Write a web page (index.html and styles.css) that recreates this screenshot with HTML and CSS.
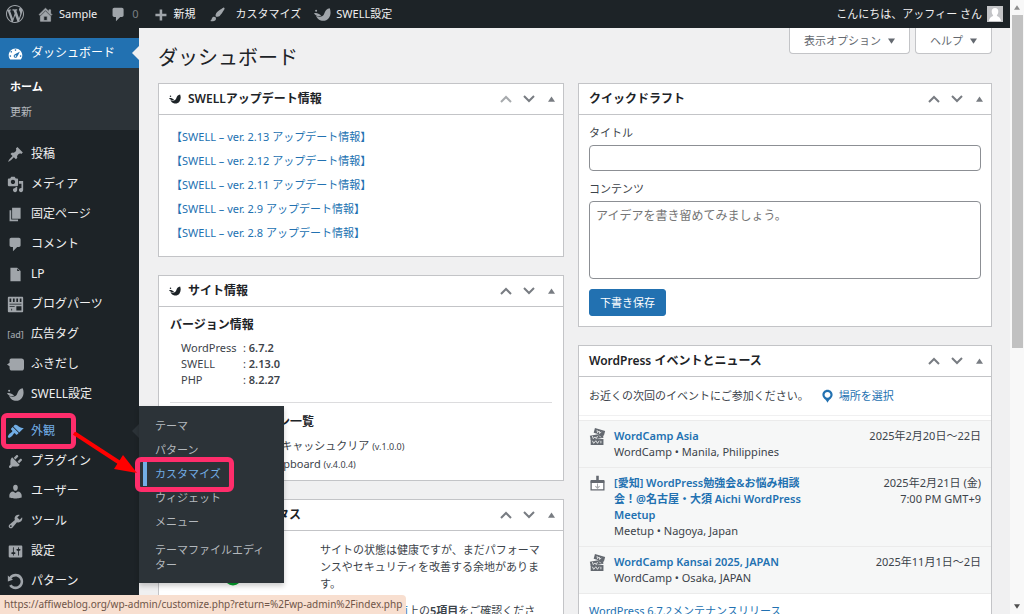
FILE: index.html
```html
<!DOCTYPE html>
<html lang="ja">
<head>
<meta charset="utf-8">
<meta name="viewport" content="width=device-width, initial-scale=1">
<title>ダッシュボード ‹ Sample — WordPress</title>
<link rel="stylesheet" href="styles.css">
</head>
<body>
<svg class="sprite" aria-hidden="true">
  <symbol id="i-wp" viewBox="0 0 20 20"><path d="M20 10c0-5.51-4.49-10-10-10C4.48 0 0 4.49 0 10c0 5.52 4.48 10 10 10 5.51 0 10-4.48 10-10zM7.78 15.37L4.37 6.22c.55-.02 1.17-.08 1.17-.08.5-.06.44-1.13-.06-1.11 0 0-1.45.11-2.37.11-.18 0-.37 0-.58-.01C4.12 2.69 6.87 1.11 10 1.11c2.33 0 4.45.87 6.05 2.34-.68-.11-1.65.39-1.65 1.58 0 .74.45 1.36.9 2.1.35.61.55 1.36.55 2.46 0 1.49-1.4 5-1.4 5l-3.03-8.37c.54-.02.82-.17.82-.17.5-.05.44-1.25-.06-1.22 0 0-1.44.12-2.38.12-.87 0-2.33-.12-2.33-.12-.5-.03-.56 1.2-.06 1.22l.92.08 1.26 3.41zM17.41 10c.24-.64.74-1.87.43-4.25.7 1.29 1.05 2.71 1.05 4.25 0 3.29-1.73 6.24-4.4 7.78.97-2.59 1.94-5.2 2.92-7.78zM6.1 18.09C3.12 16.65 1.11 13.53 1.11 10c0-1.3.23-2.48.72-3.59C3.25 10.3 4.67 14.2 6.1 18.09zm4.03-6.63l2.58 6.98c-.86.29-1.76.45-2.71.45-.79 0-1.57-.11-2.29-.33.81-2.38 1.62-4.74 2.42-7.1z"/></symbol>
  <symbol id="i-home" viewBox="0 0 20 20"><path stroke="currentColor" stroke-width=".8" d="M16 8.5l1.53 1.53-1.06 1.06L10 4.6l-6.47 6.49-1.06-1.06L10 2.5l4 4v-2h2v4zm-6-2.46l6 5.99V18H4v-5.97zM12 17v-5H8v5h4z"/></symbol>
  <symbol id="i-comment" viewBox="0 0 20 20"><path d="M5 2h9c1.1 0 2 .9 2 2v7c0 1.1-.9 2-2 2h-2l-5 5v-5H5c-1.1 0-2-.9-2-2V4c0-1.1.9-2 2-2z"/></symbol>
  <symbol id="i-plus" viewBox="0 0 20 20"><path d="M17 9v3h-5v5H9v-5H4V9h5V4h3v5z"/></symbol>
  <symbol id="i-brush" viewBox="0 0 20 20"><path d="M18.33 3.57s.27-.8-.31-1.36c-.53-.52-1.22-.24-1.22-.24-.61.3-5.76 3.47-7.67 5.57-.86.96-2.06 3.79-1.09 4.82.92.98 3.96-.17 4.79-1 2.06-2.06 5.21-7.17 5.5-7.79zM1.4 17.65c2.37-1.56 1.46-3.41 3.23-4.64.93-.65 2.22-.62 3.08.29.63.67.8 2.57-.16 3.46-1.57 1.45-4 1.55-6.15.89z"/></symbol>
  <symbol id="i-swell" viewBox="0 0 20 20"><path d="M18.500 2.500c1.600 4 1.200 8.500-1 11.500-2.300 3-6 4.200-9.500 3-3-1-4.800-3-5.500-5.500 2.500 1.600 5.300 1.700 7.500.3C13.500 9.500 11.500 3.800 18.500 2.500z"/><path d="M0 8.500c2.500-.8 5.500-.3 8.500 3-3.500 1-6.500.5-8.500-3z"/><circle cx="2.500" cy="5.500" r="1.200"/></symbol>
  <symbol id="i-dash" viewBox="0 0 20 20"><path d="M3.76 17h12.48c1.1-1.37 1.76-3.11 1.76-5 0-4.42-3.58-8-8-8s-8 3.58-8 8c0 1.89.66 3.63 1.76 5zM9 6c0-.55.45-1 1-1s1 .45 1 1c0 .56-.45 1-1 1s-1-.44-1-1zM4 8c0-.55.45-1 1-1s1 .45 1 1c0 .56-.45 1-1 1s-1-.44-1-1zm4.52 3.400c.84-.83 6.510-3.500 6.510-3.500s-2.660 5.680-3.490 6.510c-.84.84-2.180.84-3.020 0-.83-.83-.83-2.180 0-3.010zM3 13c0-.55.45-1 1-1s1 .45 1 1c0 .56-.45 1-1 1s-1-.44-1-1zm6 0c0 .56.45 1 1 1s1-.44 1-1c0-.55-.45-1-1-1s-1 .45-1 1zm6 0c0-.55.45-1 1-1s1 .45 1 1c0 .56-.45 1-1 1s-1-.44-1-1z"/></symbol>
  <symbol id="i-pin" viewBox="0 0 20 20"><path d="M10.440 3.020l1.820-1.820 6.360 6.350-1.830 1.820c-1.050-.68-2.480-.57-3.410.36l-.75.75c-.92.93-1.040 2.350-.35 3.410l-1.830 1.820-2.410-2.410-2.800 2.790c-.42.42-3.380 2.710-3.800 2.290s1.860-3.390 2.280-3.810l2.790-2.790L4.100 9.360l1.830-1.820c1.050.69 2.480.57 3.400-.36l.75-.75c.93-.92 1.050-2.350.36-3.410z"/></symbol>
  <symbol id="i-media" viewBox="0 0 20 20"><path d="M13 11V4c0-.55-.45-1-1-1h-1.670L9 1H5L3.670 3H2c-.55 0-1 .45-1 1v7c0 .55.45 1 1 1h10c.55 0 1-.45 1-1zM7 4.500c1.380 0 2.500 1.120 2.500 2.500S8.380 9.500 7 9.500 4.500 8.380 4.500 7 5.620 4.500 7 4.500zM14 6h5v10.500c0 1.380-1.120 2.500-2.500 2.500S14 17.880 14 16.500s1.120-2.500 2.500-2.500c.17 0 .34.02.5.05V9h-3V6zm-4 8.050V13h2v3.500c0 1.380-1.120 2.500-2.500 2.500S7 17.880 7 16.500 8.120 14 9.500 14c.17 0 .34.02.5.05z"/></symbol>
  <symbol id="i-page" viewBox="0 0 20 20"><path d="M6 15V2h10v13H6zm-1 1h8v2H3V5h2v11z"/></symbol>
  <symbol id="i-doc" viewBox="0 0 20 20"><path d="M12 2l4 4v12H4V2h8zm0 4h3l-3-3v3z"/></symbol>
  <symbol id="i-parts" viewBox="0 0 20 20"><path fill-rule="evenodd" d="M2 1h16q1 0 1 1v16q0 1-1 1H2q-1 0-1-1V2q0-1 1-1zm1 2v4h2V3zm4 0v4h2V3zm4 0v4h2V3zm4 0v4h2V3zM3 9v1h14V9zm0 3v1h6v-1zm2 3v2h1v-2zm6-3v5h6v-5z"/></symbol>
  <symbol id="i-balloon" viewBox="0 0 20 20"><path d="M5 3h12q3 0 3 3v8q0 3-3 3H6q-3 0-3-3v-2L0 10l3-2V5q0-2 2-2z"/></symbol>
  <symbol id="i-theme" viewBox="0 0 20 20"><path d="M14.480 11.060L7.410 3.990l1.500-1.500c.5-.56 2.300-.47 3.510.32 1.210.8 1.430 1.280 2.910 2.100 1.180.64 2.450 1.260 4.450.85zm-.71.71L6.700 4.700 4.930 6.470c-.39.39-.39 1.020 0 1.410l1.060 1.060c.39.39.39 1.030 0 1.420-.6.6-1.430 1.110-2.210 1.690-.35.26-.7.53-1.010.84C1.430 14.230.4 16.080 1.400 17.070c.99 1 2.840-.03 4.180-1.360.31-.31.58-.66.85-1.020.57-.78 1.080-1.610 1.690-2.210.39-.39 1.020-.39 1.410 0l1.060 1.060c.39.39 1.020.39 1.410 0z"/></symbol>
  <symbol id="i-plugin" viewBox="0 0 20 20"><path d="M13.110 4.360L9.870 7.600 8 5.730l3.240-3.240c.35-.34 1.050-.2 1.560.32.52.51.66 1.210.31 1.550zm-8 1.770l.91-1.120 9.010 9.010-1.190.84c-.71.71-2.630 1.160-3.820 1.160H6.140L4.900 17.260c-.59.59-1.540.59-2.120 0-.59-.58-.59-1.530 0-2.120l1.240-1.240v-3.880c0-1.130.4-3.190 1.090-3.890zm7.260 3.970l3.240-3.240c.34-.35 1.040-.21 1.550.31.52.51.66 1.210.31 1.550l-3.240 3.250z"/></symbol>
  <symbol id="i-user" viewBox="0 0 20 20"><path d="M10 9.250c-2.270 0-2.730-3.440-2.730-3.440C7 4.020 7.820 2 9.970 2c2.160 0 2.980 2.020 2.710 3.810 0 0-.41 3.440-2.680 3.440zm0 2.570L12.720 10c2.390 0 4.520 2.330 4.520 4.530v2.490s-3.650 1.130-7.240 1.130c-3.650 0-7.240-1.130-7.240-1.130v-2.490c0-2.250 1.940-4.480 4.470-4.480z"/></symbol>
  <symbol id="i-tool" viewBox="0 0 20 20"><path d="M16.680 9.770c-1.340 1.340-3.300 1.670-4.950.99l-5.410 6.520c-.99.99-2.590.99-3.580 0s-.99-2.590 0-3.570l6.520-5.420c-.68-1.650-.35-3.610.99-4.950 1.280-1.280 3.120-1.620 4.720-1.060l-2.890 2.890 2.820 2.820 2.860-2.870c.53 1.580.18 3.390-1.080 4.650zM3.810 16.210c.4.39 1.040.39 1.430 0 .4-.4.4-1.040 0-1.430-.39-.4-1.030-.4-1.430 0-.39.39-.39 1.030 0 1.430z"/></symbol>
  <symbol id="i-set" viewBox="0 0 20 20"><path d="M18 16V4c0-.55-.45-1-1-1H3c-.55 0-1 .45-1 1v12c0 .55.45 1 1 1h14c.55 0 1-.45 1-1zM8 11h1c.55 0 1 .45 1 1s-.45 1-1 1H8v1.500c0 .28-.22.5-.5.5s-.5-.22-.5-.5V13H6c-.55 0-1-.45-1-1s.45-1 1-1h1V5.500c0-.28.22-.5.5-.5s.5.22.5.5V11zm5-2h-1c-.55 0-1-.45-1-1s.45-1 1-1h1V5.500c0-.28.22-.5.5-.5s.5.22.5.5V7h1c.55 0 1 .45 1 1s-.45 1-1 1h-1v5.500c0 .28-.22.5-.5.5s-.5-.22-.5-.5V9z"/></symbol>
  <symbol id="i-rotate" viewBox="0 0 20 20"><path d="M10.250 1.020c5.100 0 8.750 4.040 8.750 9s-3.650 9-8.750 9c-3.200 0-6.020-1.590-7.680-3.990l2.590-1.520c1.100 1.500 2.860 2.510 4.840 2.510 3.300 0 6-2.790 6-6s-2.700-6-6-6c-1.970 0-3.720 1-4.820 2.490L7 8.020l-6 2v-7L2.890 4.600c1.690-2.170 4.360-3.580 7.360-3.580z"/></symbol>
  <symbol id="i-location" viewBox="0 0 20 20"><path d="M10 2C6.690 2 4 4.690 4 8c0 2.020 1.170 3.710 2.530 4.890.43.37 1.180.96 1.850 1.830.74.97 1.410 2.010 1.620 2.710.21-.7.88-1.740 1.620-2.710.67-.87 1.420-1.460 1.850-1.830C14.830 11.710 16 10.020 16 8c0-3.310-2.690-6-6-6zm0 2.560c1.900 0 3.440 1.540 3.440 3.440S11.900 11.440 10 11.440 6.560 9.900 6.560 8 8.100 4.560 10 4.560z"/></symbol>
  <symbol id="i-camp" viewBox="0 0 20 20"><path d="M7 0l12 3.500-1.500 5.500L5.500 5.500z"/><path d="M1 9l15-2.500 1 5L2 14z"/><path d="M2 13h15v7H2z"/><path d="M9.500 2.500l.5 3 2-2 .5 3 2-2M4 9.500l1 3 2-2 1.500 2 1.500-3M12 9l2 2M4 15l1.500 3L8 15l2 3 2-3M14 15v3" fill="none" stroke="#f6f7f7" stroke-width="1"/></symbol>
  <symbol id="i-meetup" viewBox="0 0 20 20"><path d="M2.500 7.500h15v10h-15z" fill="#fff" stroke="currentColor" stroke-width="1.500"/><path d="M2 6h16v3.500H2zM8.500 1h3v7h-3z"/><path d="M10 10v5M7.500 13l2.500 2.500 2.500-2.500" fill="none" stroke="#a7aaad" stroke-width="1.200"/></symbol>
  <symbol id="i-up" viewBox="0 0 14 10"><path d="M2 8l5-5 5 5" fill="none" stroke="currentColor" stroke-width="2"/></symbol>
  <symbol id="i-down" viewBox="0 0 14 10"><path d="M2 2l5 5 5-5" fill="none" stroke="currentColor" stroke-width="2"/></symbol>
  <symbol id="i-tri" viewBox="0 0 8 6"><path d="M4 0l4 6H0z"/></symbol>
</svg>

<div class="window">
  <div class="page">
    <header class="adminbar">
      <a class="bar-item bar-logo" href="#" aria-label="WordPress について"><svg class="icon-lg"><use href="#i-wp"/></svg></a>
      <a class="bar-item bar-site" href="#"><svg class="icon"><use href="#i-home"/></svg>Sample</a>
      <a class="bar-item bar-comments" href="#"><svg class="icon"><use href="#i-comment"/></svg><span class="dim">0</span></a>
      <a class="bar-item bar-new" href="#"><svg class="icon"><use href="#i-plus"/></svg>新規</a>
      <a class="bar-item bar-custom" href="#"><svg class="icon"><use href="#i-brush"/></svg>カスタマイズ</a>
      <a class="bar-item bar-swell" href="#"><svg class="icon"><use href="#i-swell"/></svg>SWELL設定</a>
      <a class="bar-item bar-user" href="#">こんにちは、アッフィー さん<svg class="avatar" viewBox="0 0 16 16"><path class="avatar-bg" d="M0 0h16v16H0z"/><path class="avatar-fg" d="M8 2c2.200 0 3.500 1.500 3.300 3.800-.1 1.700-.9 3-1.500 3.500.2 1.700 3.700 1.200 4.200 5.700H2c.5-4.500 4-4 4.200-5.700-.6-.5-1.400-1.800-1.500-3.500C4.500 3.500 5.800 2 8 2z"/></svg></a>
    </header>

    <div class="body">
      <nav class="sidebar" aria-label="メインメニュー">
        <a class="menu-item current" href="#"><svg class="icon"><use href="#i-dash"/></svg>ダッシュボード</a>
        <div class="submenu">
          <a class="here" href="#">ホーム</a>
          <a href="#">更新</a>
        </div>
        <div class="menu-group">
          <a class="menu-item" href="#"><svg class="icon"><use href="#i-pin"/></svg>投稿</a>
          <a class="menu-item" href="#"><svg class="icon"><use href="#i-media"/></svg>メディア</a>
          <a class="menu-item" href="#"><svg class="icon"><use href="#i-page"/></svg>固定ページ</a>
          <a class="menu-item" href="#"><svg class="icon"><use href="#i-comment"/></svg>コメント</a>
          <a class="menu-item" href="#"><svg class="icon"><use href="#i-doc"/></svg>LP</a>
          <a class="menu-item" href="#"><svg class="icon"><use href="#i-parts"/></svg>ブログパーツ</a>
          <a class="menu-item" href="#"><span class="icon ad">[ad]</span>広告タグ</a>
          <a class="menu-item" href="#"><svg class="icon"><use href="#i-balloon"/></svg>ふきだし</a>
          <a class="menu-item" href="#"><svg class="icon"><use href="#i-swell"/></svg>SWELL設定</a>
        </div>
        <div class="menu-group second">
          <div class="menu-parent">
            <a class="menu-item open" href="#"><svg class="icon"><use href="#i-theme"/></svg>外観</a>
            <div class="flyout">
              <a href="#">テーマ</a>
              <a href="#">パターン</a>
              <a class="hover" href="#">カスタマイズ</a>
              <a href="#">ウィジェット</a>
              <a href="#">メニュー</a>
              <a class="two-line" href="#">テーマファイルエディター</a>
            </div>
            <span class="mark mark-parent"></span>
            <span class="mark mark-child"></span>
            <svg class="mark-arrow" viewBox="0 0 66 44"><path d="M1 1l46 30" stroke="#f00" stroke-width="4" fill="none"/><path d="M50 23l14 18-23-4z" fill="#f00"/></svg>
          </div>
          <a class="menu-item" href="#"><svg class="icon"><use href="#i-plugin"/></svg>プラグイン</a>
          <a class="menu-item" href="#"><svg class="icon"><use href="#i-user"/></svg>ユーザー</a>
          <a class="menu-item" href="#"><svg class="icon"><use href="#i-tool"/></svg>ツール</a>
          <a class="menu-item" href="#"><svg class="icon"><use href="#i-set"/></svg>設定</a>
          <a class="menu-item" href="#"><svg class="icon"><use href="#i-rotate"/></svg>パターン</a>
        </div>
      </nav>

      <main class="content">
        <div class="page-head">
          <h1>ダッシュボード</h1>
          <div class="screen-tabs">
            <button type="button">表示オプション<svg class="tri"><use href="#i-tri"/></svg></button>
            <button type="button">ヘルプ<svg class="tri"><use href="#i-tri"/></svg></button>
          </div>
        </div>

        <div class="columns">
          <div class="column">
            <section class="box">
              <div class="box-head"><svg class="icon-sm"><use href="#i-swell"/></svg><h2>SWELLアップデート情報</h2>
                <button class="ctl off" type="button" aria-label="上に移動"><svg><use href="#i-up"/></svg></button><button class="ctl" type="button" aria-label="下に移動"><svg><use href="#i-down"/></svg></button><button class="ctl toggle" type="button" aria-label="開閉"><svg><use href="#i-tri"/></svg></button></div>
              <ul class="updates">
                <li><a href="#">【SWELL – ver. 2.13 アップデート情報】</a></li>
                <li><a href="#">【SWELL – ver. 2.12 アップデート情報】</a></li>
                <li><a href="#">【SWELL – ver. 2.11 アップデート情報】</a></li>
                <li><a href="#">【SWELL – ver. 2.9 アップデート情報】</a></li>
                <li><a href="#">【SWELL – ver. 2.8 アップデート情報】</a></li>
              </ul>
            </section>

            <section class="box">
              <div class="box-head"><svg class="icon-sm"><use href="#i-swell"/></svg><h2>サイト情報</h2>
                <button class="ctl" type="button" aria-label="上に移動"><svg><use href="#i-up"/></svg></button><button class="ctl" type="button" aria-label="下に移動"><svg><use href="#i-down"/></svg></button><button class="ctl toggle" type="button" aria-label="開閉"><svg><use href="#i-tri"/></svg></button></div>
              <div class="site-info">
                <h3>バージョン情報</h3>
                <dl class="versions">
                  <dt>WordPress</dt><dd>: <b>6.7.2</b></dd>
                  <dt>SWELL</dt><dd>: <b>2.13.0</b></dd>
                  <dt>PHP</dt><dd>: <b>8.2.27</b></dd>
                </dl>
                <h3 class="divided">有効化中のプラグイン一覧</h3>
                <ul class="plugins">
                  <li>ConoHa WING 自動 キャッシュクリア <small>(v.1.0.0)</small></li>
                  <li>Copy Anything to Clipboard <small>(v.4.0.4)</small></li>
                </ul>
              </div>
            </section>

            <section class="box">
              <div class="box-head"><h2>サイトヘルスステータス</h2>
                <button class="ctl" type="button" aria-label="上に移動"><svg><use href="#i-up"/></svg></button><button class="ctl" type="button" aria-label="下に移動"><svg><use href="#i-down"/></svg></button><button class="ctl toggle" type="button" aria-label="開閉"><svg><use href="#i-tri"/></svg></button></div>
              <div class="health">
                <div class="health-status"><svg class="ring" viewBox="0 0 18 18"><circle cx="9" cy="9" r="7"/></svg>良好</div>
                <div class="health-text">
                  <p>サイトの状態は健康ですが、まだパフォーマンスやセキュリティを改善する余地があります。</p>
                  <p><a href="#">サイトヘルス画面</a>上の<b>5項目</b>をご確認ください。</p>
                </div>
              </div>
            </section>
          </div>

          <div class="column">
            <section class="box">
              <div class="box-head"><h2>クイックドラフト</h2>
                <button class="ctl" type="button" aria-label="上に移動"><svg><use href="#i-up"/></svg></button><button class="ctl" type="button" aria-label="下に移動"><svg><use href="#i-down"/></svg></button><button class="ctl toggle" type="button" aria-label="開閉"><svg><use href="#i-tri"/></svg></button></div>
              <form class="draft">
                <label for="draft-title">タイトル</label>
                <input id="draft-title" type="text">
                <label for="draft-content">コンテンツ</label>
                <textarea id="draft-content" placeholder="アイデアを書き留めてみましょう。"></textarea>
                <button class="primary" type="button">下書き保存</button>
              </form>
            </section>

            <section class="box">
              <div class="box-head"><h2>WordPress イベントとニュース</h2>
                <button class="ctl" type="button" aria-label="上に移動"><svg><use href="#i-up"/></svg></button><button class="ctl" type="button" aria-label="下に移動"><svg><use href="#i-down"/></svg></button><button class="ctl toggle" type="button" aria-label="開閉"><svg><use href="#i-tri"/></svg></button></div>
              <p class="nearby">お近くの次回のイベントにご参加ください。 <a href="#"><svg class="icon"><use href="#i-location"/></svg>場所を選択</a></p>
              <ul class="events">
                <li><svg class="icon"><use href="#i-camp"/></svg><div class="event"><a href="#">WordCamp Asia</a><span>WordCamp • Manila, Philippines</span></div><div class="when">2025年2月20日～22日</div></li>
                <li><svg class="icon"><use href="#i-meetup"/></svg><div class="event"><a href="#">[愛知] WordPress勉強会&amp;お悩み相談会！@名古屋・大須 Aichi WordPress Meetup</a><span>Meetup • Nagoya, Japan</span></div><div class="when">2025年2月21日 (金)<br>7:00 PM GMT+9</div></li>
                <li><svg class="icon"><use href="#i-camp"/></svg><div class="event"><a href="#">WordCamp Kansai 2025, JAPAN</a><span>WordCamp • Osaka, JAPAN</span></div><div class="when">2025年11月1日～2日</div></li>
              </ul>
              <p class="news"><a href="#">WordPress 6.7.2メンテナンスリリース</a></p>
            </section>
          </div>
        </div>
      </main>
    </div>
  </div>
  <div class="scrollbar" aria-hidden="true">
    <svg class="sb-arrow"><use href="#i-tri"/></svg>
    <div class="track"><div class="thumb"></div></div>
    <svg class="sb-arrow down"><use href="#i-tri"/></svg>
  </div>
  <div class="statusbar">https://affiweblog.org/wp-admin/customize.php?return=%2Fwp-admin%2Findex.php</div>
</div>
</body>
</html>
```
FILE: styles.css
```css
* { box-sizing: border-box; }

body {
  margin: 0;
  background: #f0f0f1;
  color: #3c434a;
  font: 11px/16px "Noto Sans", "Noto Sans CJK JP", sans-serif;
}

h1, h2, h3, p, ul, dl, dd { margin: 0; padding: 0; }
ul { list-style: none; }
a { color: #2271b1; text-decoration: none; }
b { font-weight: 600; }
button, input, textarea { font: inherit; }
svg { fill: currentColor; flex: none; }

.sprite { position: absolute; width: 0; height: 0; }
.icon { width: 17px; height: 17px; }
.icon-lg { width: 18px; height: 18px; }
.icon-sm { width: 12px; height: 12px; margin-right: 7px; color: #1d2327; }

.window {
  position: relative;
  display: flex;
  height: 100vh;
  overflow: hidden;
}
.page {
  flex: 1;
  min-width: 0;
  display: flex;
  flex-direction: column;
}
.body { flex: 1; min-height: 0; display: flex; }

/* Admin bar */
.adminbar {
  display: flex;
  align-items: center;
  height: 28px;
  flex: none;
  padding: 0 7px 0 6px;
  background: #1d2327;
}
.bar-item {
  display: flex;
  align-items: center;
  gap: 5px;
  margin-right: 13px;
  color: #f0f0f1;
  white-space: nowrap;
}
.bar-item .icon, .bar-item .icon-lg, .dim { color: #a0a5aa; }
.bar-custom { gap: 10px; }
.dim { opacity: .7; }
.bar-user { margin: 0 0 0 auto; }
.avatar { width: 16px; height: 16px; }
.avatar-bg { fill: #c3c4c7; }
.avatar-fg { fill: #fff; }

/* Sidebar */
.sidebar {
  width: 139px;
  flex: none;
  padding-top: 10px;
  background: #1d2327;
  font-size: 12px;
}
.menu-item {
  position: relative;
  display: flex;
  align-items: center;
  gap: 7px;
  height: 30px;
  padding-left: 7px;
  color: #f0f0f1;
}
.menu-item .icon { color: #a0a5aa; }
.menu-item.current { background: #2271b1; color: #fff; }
.menu-item.current .icon { color: #fff; }
.menu-item.current::after, .menu-item.open::after {
  content: "";
  position: absolute;
  right: 0;
  top: 8px;
  border: 7px solid transparent;
  border-left: 0;
  border-right-color: #f0f0f1;
}
.menu-item.open::after { border-right-color: #2c3338; }
.menu-item.open, .menu-item.open .icon { color: #72aee6; }
.ad { display: flex; justify-content: center; font-size: 9px; font-weight: 500; line-height: 17px; }
.submenu { padding: 6px 10px; background: #2c3338; font-size: 11px; line-height: 25px; }
.submenu a { display: block; color: #b4b9be; }
.submenu .here { color: #fff; font-weight: 600; }
.menu-group { padding-top: 9px; }
.menu-group.second { padding-top: 7px; }

.menu-parent { position: relative; }
.flyout {
  position: absolute;
  z-index: 2;
  left: 139px;
  top: -10px;
  width: 145px;
  padding: 8px 0 7px;
  background: #2c3338;
  box-shadow: 0 3px 5px rgba(0, 0, 0, .2);
  font-size: 11px;
  line-height: 24px;
}
.flyout a {
  display: block;
  margin-left: 4px;
  padding: 0 10px 0 8px;
  border-left: 4px solid transparent;
  color: #b4b9be;
}
.flyout .hover { border-left-color: #72aee6; color: #72aee6; }
.flyout .two-line { padding-top: 8px; padding-bottom: 4px; line-height: 15px; }

.mark {
  position: absolute;
  z-index: 3;
  border: 5px solid #ff2d6b;
  border-radius: 6px;
}
.mark-parent { left: 1px; top: -3px; width: 75px; height: 36px; }
.mark-child { left: 135px; top: 41px; width: 99px; height: 35px; }
.mark-arrow { position: absolute; z-index: 4; left: 73px; top: 16px; width: 66px; height: 44px; }

/* Content */
.content { flex: 1; min-width: 0; padding: 0 18px 0 19px; }
.page-head { display: flex; justify-content: space-between; height: 55px; }
h1 {
  padding-top: 17px;
  color: #1d2327;
  font-size: 20px;
  font-weight: 400;
  line-height: 26px;
}
.screen-tabs { display: flex; gap: 5px; align-items: flex-start; }
.screen-tabs button {
  display: flex;
  align-items: center;
  gap: 7px;
  height: 26px;
  padding: 0 14px;
  border: 1px solid #c3c4c7;
  border-top: 0;
  border-radius: 0 0 4px 4px;
  background: #fff;
  color: #646970;
}
.tri { width: 7px; height: 6px; transform: rotate(180deg); }

.columns {
  display: grid;
  grid-template-columns: 406fr 414fr;
  gap: 14px;
  align-items: start;
}
.column { display: grid; gap: 18px; min-width: 0; }
.box { border: 1px solid #c3c4c7; background: #fff; }
.box-head {
  display: flex;
  align-items: center;
  height: 31px;
  padding: 0 0 0 10px;
  border-bottom: 1px solid #c3c4c7;
}
h2, h3 { color: #1d2327; font-size: 12px; font-weight: 600; line-height: 18px; }
h2 { flex: 1; }
.ctl {
  display: flex;
  align-items: center;
  justify-content: center;
  width: 23px;
  height: 24px;
  padding: 0;
  border: 0;
  background: none;
  color: #787c82;
}
.ctl svg { width: 14px; height: 10px; }
.ctl.off { color: #a7aaad; }
.ctl.toggle svg { width: 7px; height: 6px; }

.updates { padding: 10px 10px 11px; line-height: 24px; }
.updates li { padding-left: 2px; }

.site-info { padding: 9px 11px 7px; }
.versions {
  display: grid;
  grid-template-columns: 62px 1fr;
  margin: 6px 0 14px;
  padding-left: 11px;
}
.divided { padding-top: 10px; border-top: 1px solid #dcdcde; }
.plugins { padding: 6px 0 0 9px; line-height: 17px; }
small { font-size: 9px; }

.health { display: flex; padding: 10px 15px 0 10px; line-height: 17px; }
.health-status {
  display: flex;
  flex-direction: column;
  align-items: center;
  gap: 7px;
  width: 127px;
  padding-top: 27px;
  margin-right: 24px;
  flex: none;
}
.ring { width: 18px; height: 18px; }
.ring circle { fill: none; stroke: #00a32a; stroke-width: 3; }
.health-text p { margin-bottom: 10px; }

.draft { display: flex; flex-direction: column; padding: 9px 10px 10px; }
.draft label { margin-bottom: 3px; line-height: 18px; }
.draft input, .draft textarea {
  width: 100%;
  margin: 0 0 9px;
  border: 1px solid #8c8f94;
  border-radius: 4px;
  background: #fff;
}
.draft input { height: 26px; padding: 0 7px; }
.draft textarea { height: 78px; margin-bottom: 10px; padding: 5px 6px; font-size: 12px; line-height: 18px; resize: none; }
.draft textarea::placeholder { color: #757575; }
.primary {
  align-self: flex-start;
  height: 27px;
  padding: 0 10px;
  border: 1px solid #2271b1;
  border-radius: 3px;
  background: #2271b1;
  color: #fff;
}

.nearby { display: flex; align-items: center; gap: 10px; height: 39px; padding: 0 10px; border-bottom: 1px solid #f0f0f1; }
.nearby a { display: flex; align-items: center; gap: 3px; }
.events { margin-top: 4px; background: #f6f7f7; border-bottom: 1px solid #ebebeb; }
.events li { display: flex; padding: 7px 10px; border-top: 1px solid #ebebeb; }
.events .icon { color: #646970; margin-right: 8px; }
.event { width: 196px; }
.event a { display: block; font-weight: 600; }
.when { margin-left: auto; text-align: right; white-space: nowrap; }
.news { padding: 9px 10px; }

/* Browser chrome over the page */
.scrollbar {
  display: flex;
  flex-direction: column;
  align-items: center;
  width: 14px;
  flex: none;
  padding: 5px 0;
  background: #f8f8f8;
}
.sb-arrow { width: 6px; height: 5px; color: #8c8c8c; }
.sb-arrow.down { transform: rotate(180deg); color: #505050; }
.track { flex: 1; width: 11px; padding: 5px 0; }
.thumb { height: 57%; background: #c1c1c1; }
.statusbar {
  position: absolute;
  z-index: 5;
  left: 0;
  bottom: 0;
  height: 19px;
  padding: 0 4px;
  border-top-right-radius: 4px;
  background: #f8dfd0;
  color: #6f5548;
  font-size: 10px;
  line-height: 19px;
}
```
